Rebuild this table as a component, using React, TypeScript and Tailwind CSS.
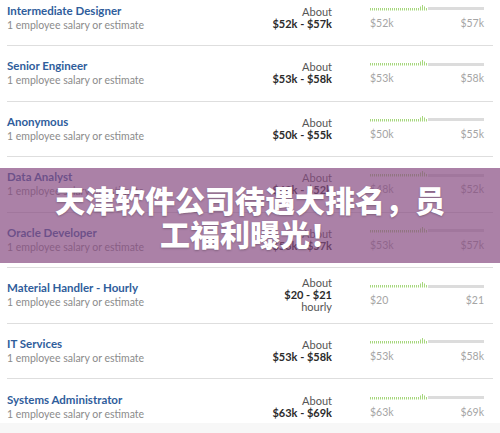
import React from "react";

type Row = {
    title: string;
    low: string;
    high: string;
    hourly?: boolean;
};

const rows: Row[] = [
    { title: "Intermediate Designer", low: "$52k", high: "$57k" },
    { title: "Senior Engineer", low: "$53k", high: "$58k" },
    { title: "Anonymous", low: "$50k", high: "$55k" },
    { title: "Data Analyst", low: "$48k", high: "$52k" },
    { title: "Oracle Developer", low: "$53k", high: "$57k" },
    { title: "Material Handler - Hourly", low: "$20", high: "$21", hourly: true },
    { title: "IT Services", low: "$53k", high: "$58k" },
    { title: "Systems Administrator", low: "$63k", high: "$69k" },
];

// little histogram strip + grey remainder
function RangeBar() {
    const ticks = Array.from({ length: 29 }, (_, i) => i * 2);
    return (
        <div className="flex items-end h-[7px] w-[114px]">
            <svg width="58" height="7" viewBox="0 0 58 7" className="block">
                {ticks.map((x, i) => {
                    const top = i === 26 ? 1 : i === 25 || i === 27 ? 2.5 : 4;
                    return <rect key={i} x={x} y={top} width="1" height={6.5 - top} fill="#a6d77c" />;
                })}
            </svg>
            <div className="flex-1 h-[3px] mb-[0.5px] bg-[#dcdcdc]" />
        </div>
    );
}

function SalaryRow({ row, last }: { row: Row; last?: boolean }) {
    return (
        <div
            className={`mx-[7px] h-[55.5px] flex items-center ${last ? "" : "border-b border-[#dedede]"}`}
        >
            <div className="flex-1 flex flex-col">
                <span className="text-[11.5px] leading-[15px] font-bold text-[#2f5d9b]">{row.title}</span>
                <span className="text-[10.5px] leading-[15px] text-[#8b8b8b]">1 employee salary or estimate</span>
            </div>
            <div className="flex flex-col items-end text-right">
                <span className="text-[11px] leading-[12px] text-[#555]">About</span>
                <span className="text-[11px] leading-[12px] font-bold text-[#2b2b2b]">
                    {row.low} - {row.high}
                </span>
                {row.hourly && <span className="text-[11px] leading-[12px] text-[#555]">hourly</span>}
            </div>
            <div className="ml-[38px] mr-[9px] w-[114px] flex flex-col gap-[6px] -mt-[3px]">
                <RangeBar />
                <div className="flex justify-between text-[10.5px] leading-[12px] text-[#a5a5a5]">
                    <span>{row.low}</span>
                    <span>{row.high}</span>
                </div>
            </div>
        </div>
    );
}

export default function App() {
    return (
        <div className="relative w-[500px] h-[433px] overflow-hidden bg-[#f7f7f7] font-['Lato',sans-serif]">
            <div className="bg-white -mt-[9.5px]">
                {rows.slice(0, 7).map((row) => (
                    <SalaryRow key={row.title} row={row} />
                ))}
                <div className="h-[43.5px] overflow-hidden">
                    <SalaryRow row={rows[7]} last />
                </div>
            </div>

            <div className="absolute left-0 right-0 top-[168px] h-[95px] bg-[#874b82]/70 flex items-center justify-center">
                <p className="w-[400px] text-center text-white font-black text-[30px] leading-[34px] font-['Noto_Sans_CJK_SC',sans-serif] [text-shadow:0_1px_2px_rgba(0,0,0,0.25)]">
                    天津软件公司待遇大排名，员工福利曝光！
                </p>
            </div>
        </div>
    );
}
